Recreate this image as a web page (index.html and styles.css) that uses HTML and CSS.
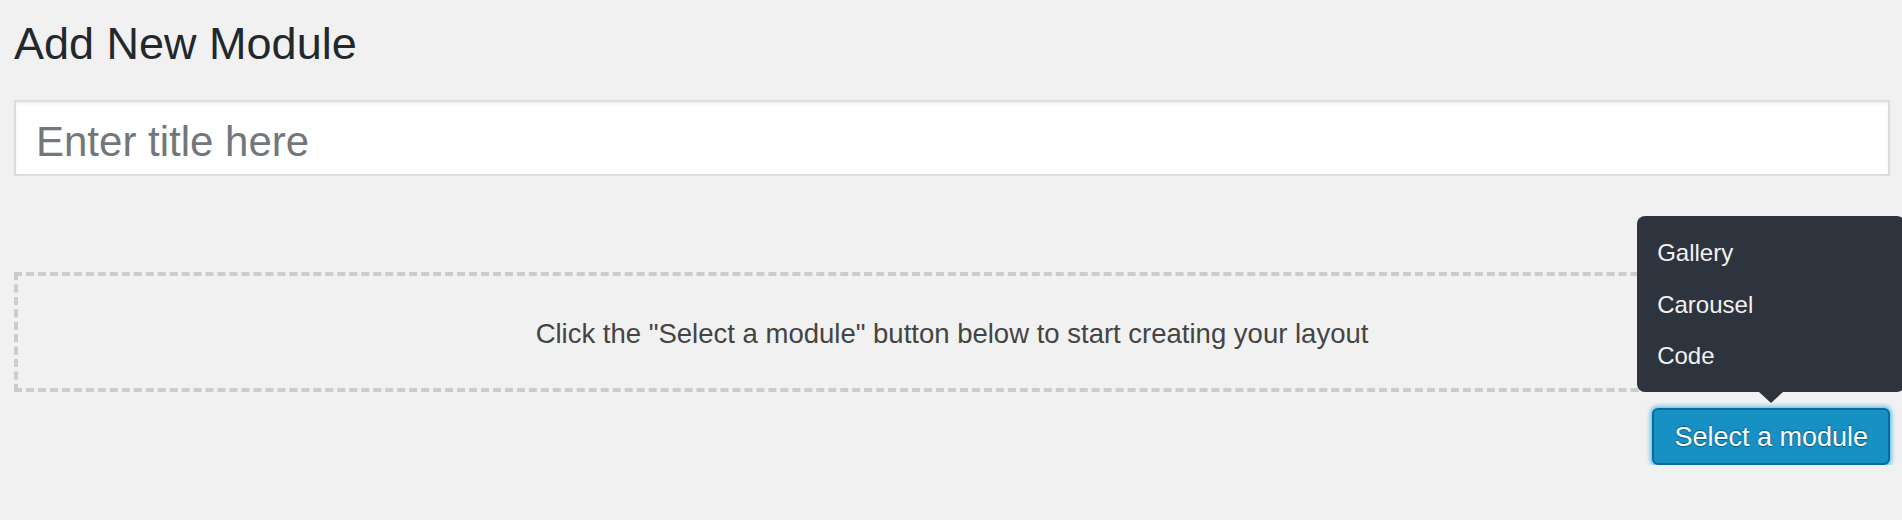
FILE: index.html
```html
<!DOCTYPE html>
<html lang="en">
<head>
<meta charset="utf-8">
<title>Add New Module</title>
<link rel="stylesheet" href="styles.css">
</head>
<body>
<div class="wrap">
  <h1 class="page-title">Add New Module</h1>
  <input class="title-input" type="text" placeholder="Enter title here">
  <div class="dropzone">
    <p class="dropzone-text">Click the "Select a module" button below to start creating your layout</p>
  </div>
  <div class="actions">
    <div class="picker">
      <div class="menu">
        <ul class="menu-list">
          <li class="menu-item">Gallery</li>
          <li class="menu-item">Carousel</li>
          <li class="menu-item">Code</li>
        </ul>
        <span class="menu-arrow"></span>
      </div>
      <button class="select-btn" type="button">Select a module</button>
    </div>
  </div>
</div>
</body>
</html>
```

FILE: styles.css
```css
html, body {
  margin: 0;
  padding: 0;
  background: #f1f1f1;
}

body {
  font-family: "Liberation Sans", Arial, sans-serif;
  overflow: hidden;
}

.wrap {
  padding: 0 12px 0 14px;
}

.page-title {
  margin: 18px 0 0;
  font-size: 45px;
  line-height: 52px;
  font-weight: 400;
  color: #23282d;
}

.title-input {
  display: block;
  box-sizing: border-box;
  width: 100%;
  height: 76px;
  margin: 30px 0 0;
  padding: 8px 20px 0;
  border: 2px solid #dddddd;
  background: #ffffff;
  box-shadow: inset 0 2px 4px rgba(0, 0, 0, 0.06);
  font-family: "Liberation Sans", Arial, sans-serif;
  font-size: 42px;
  color: #32373c;
  outline: none;
}

.title-input::placeholder {
  color: #72777c;
  opacity: 1;
}

.dropzone {
  box-sizing: border-box;
  height: 120px;
  margin-top: 96px;
  padding-top: 3px;
  border: 4px dashed #cccccc;
  display: flex;
  align-items: center;
  justify-content: center;
}

.dropzone-text {
  margin: 0;
  font-size: 27.5px;
  color: #444444;
}

.actions {
  display: flex;
  justify-content: flex-end;
  margin-top: 16px;
}

.picker {
  position: relative;
}

.menu {
  position: absolute;
  bottom: calc(100% + 16px);
  left: 50%;
  width: 268px;
  margin-left: -134px;
  background: #2e343d;
  border-radius: 8px;
}

.menu-list {
  list-style: none;
  margin: 0;
  padding: 11px 20px 10.5px;
}

.menu-item {
  font-size: 24px;
  line-height: 51.5px;
  color: #f1f1f1;
}

.menu-arrow {
  position: absolute;
  top: 100%;
  left: 50%;
  margin-left: -12px;
  width: 0;
  height: 0;
  border-left: 12px solid transparent;
  border-right: 12px solid transparent;
  border-top: 11px solid #2e343d;
}

.select-btn {
  display: flex;
  align-items: center;
  box-sizing: border-box;
  height: 57px;
  padding: 2px 20px 0;
  border: 2px solid #0b6a9c;
  border-radius: 6px;
  background: #1790c4;
  color: #ffffff;
  font-family: "Liberation Sans", Arial, sans-serif;
  font-size: 27px;
  text-shadow: 0 -1px 1px #0a5f8a, 0 1px 1px #0a5f8a;
  box-shadow: 0 0 0 1px #7fd0ee, 0 0 4px 2px rgba(51, 179, 219, 0.7);
  cursor: pointer;
}
```
